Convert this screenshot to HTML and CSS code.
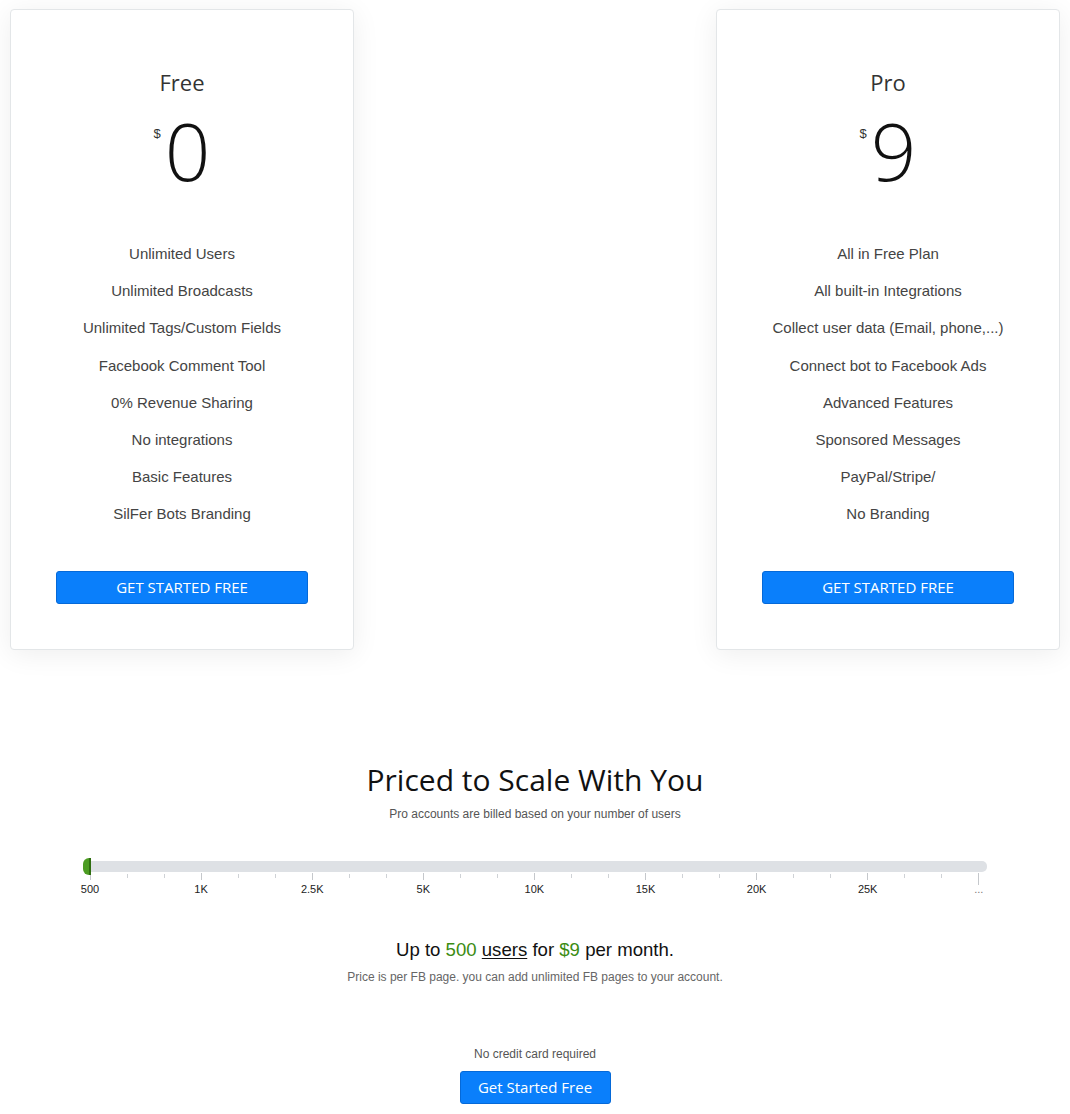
FILE: index.html
```html
<!DOCTYPE html>
<html lang="en">
  <head>
    <meta charset="UTF-8" />
    <meta name="viewport" content="width=device-width, initial-scale=1.0" />
    <title>Pricing</title>
    <link rel="stylesheet" href="styles.css">
  </head>
  <body>
    <!-- Plans -->
    <section class="plans">
      <div class="plan">
        <h2 class="plan-name">Free</h2>
        <div class="plan-price"><span class="currency">$</span><span class="amount">0</span></div>
        <ul class="plan-features">
          <li>Unlimited Users</li>
          <li>Unlimited Broadcasts</li>
          <li>Unlimited Tags/Custom Fields</li>
          <li>Facebook Comment Tool</li>
          <li>0% Revenue Sharing</li>
          <li>No integrations</li>
          <li>Basic Features</li>
          <li>SilFer Bots Branding</li>
        </ul>
        <a href="#" class="btn btn-block">GET STARTED FREE</a>
      </div>

      <div class="plan">
        <h2 class="plan-name">Pro</h2>
        <div class="plan-price"><span class="currency">$</span><span class="amount">9</span></div>
        <ul class="plan-features">
          <li>All in Free Plan</li>
          <li>All built-in Integrations</li>
          <li>Collect user data (Email, phone,...)</li>
          <li>Connect bot to Facebook Ads</li>
          <li>Advanced Features</li>
          <li>Sponsored Messages</li>
          <li>PayPal/Stripe/</li>
          <li>No Branding</li>
        </ul>
        <a href="#" class="btn btn-block">GET STARTED FREE</a>
      </div>
    </section>

    <!-- Scale -->
    <section class="scale">
      <h2 class="scale-title">Priced to Scale With You</h2>
      <p class="scale-sub">Pro accounts are billed based on your number of users</p>

      <div class="slider">
        <div class="slider-track">
          <span class="slider-handle"></span>
        </div>
        <div class="slider-ticks">
          <div class="tick major"><span>500</span></div>
          <div class="tick"></div><div class="tick"></div>
          <div class="tick major"><span>1K</span></div>
          <div class="tick"></div><div class="tick"></div>
          <div class="tick major"><span>2.5K</span></div>
          <div class="tick"></div><div class="tick"></div>
          <div class="tick major"><span>5K</span></div>
          <div class="tick"></div><div class="tick"></div>
          <div class="tick major"><span>10K</span></div>
          <div class="tick"></div><div class="tick"></div>
          <div class="tick major"><span>15K</span></div>
          <div class="tick"></div><div class="tick"></div>
          <div class="tick major"><span>20K</span></div>
          <div class="tick"></div><div class="tick"></div>
          <div class="tick major"><span>25K</span></div>
          <div class="tick"></div><div class="tick"></div>
          <div class="tick major last"><span>...</span></div>
        </div>
      </div>

      <p class="scale-result">Up to <span class="hl">500</span> <u>users</u> for <span class="hl">$9</span> per month.</p>
      <p class="scale-note">Price is per FB page. you can add unlimited FB pages to your account.</p>

      <p class="cta-note">No credit card required</p>
      <a href="#" class="btn btn-cta">Get Started Free</a>
    </section>
  </body>
</html>
```

FILE: styles.css
```css
/* ---------- Reset & Base ---------- */
*{box-sizing:border-box;margin:0;padding:0;}
body{font-family:"Liberation Sans",Arial,sans-serif;color:#333;background:#fff;}
a{text-decoration:none;}

/* ---------- Buttons ---------- */
.btn{display:inline-block;background:#0a7ffb;color:#fff;border:1px solid #0569d8;border-radius:3px;font-family:"Open Sans",sans-serif;font-size:15px;line-height:31px;text-align:center;}
.btn-block{display:block;margin:0 45px;}

/* ---------- Plans ---------- */
.plans{display:flex;justify-content:space-between;padding:9px 10px 0;}
.plan{width:344px;height:641px;background:#fff;border:1px solid #e3e6e8;border-radius:4px;box-shadow:0 4px 28px rgba(0,0,0,.07);text-align:center;padding-top:56px;}
.plan-name{font-family:"Open Sans",sans-serif;font-weight:400;font-size:22px;line-height:32px;color:#333;}
.plan-price{display:flex;justify-content:center;align-items:flex-start;margin-top:10px;height:84px;}
.currency{font-family:"Liberation Sans",Arial,sans-serif;font-size:13px;color:#333;margin:18px 4px 0 0;}
.amount{font-family:"Open Sans",sans-serif;font-weight:300;font-size:80px;line-height:84px;color:#111;}
.plan-features{list-style:none;margin-top:43px;font-size:15px;line-height:37.2px;color:#444;}
.plan-features + .btn{margin-top:38px;}

/* ---------- Scale ---------- */
.scale{text-align:center;padding-top:110px;}
.scale-title{font-family:"Open Sans",sans-serif;font-weight:400;font-size:30px;line-height:40px;color:#111;}
.scale-sub{font-size:12px;color:#555;margin-top:7px;}

.slider{width:897px;margin:40px 0 0 90px;}
.slider-track{position:relative;height:11px;background:#dee1e5;border-radius:0 5px 5px 0;}
.slider-handle{position:absolute;left:-7px;top:-3px;width:8px;height:17px;background:#4c9c22;border-radius:6px 0 0 6px;border-right:2px solid #2f6e10;}
.slider-ticks{display:flex;justify-content:space-between;width:889px;height:24px;}
.tick{width:0;display:flex;flex-direction:column;align-items:center;}
.tick::before{content:"";width:1px;height:4px;margin-top:2px;background:#cfd2d6;}
.tick.major::before{height:7px;margin-top:1px;background:#c5c8cc;}
.tick.last::before{height:12px;}
.tick span{font-size:11px;line-height:13px;color:#222;white-space:nowrap;margin-top:3px;}
.tick.last span{margin-top:-2px;color:#777;}

.scale-result{font-size:18.6px;color:#111;margin-top:43px;}
.scale-result .hl{color:#3b8c12;}
.scale-result u{text-underline-offset:2px;}
.scale-note{font-size:12px;color:#666;margin-top:9px;}

.cta-note{font-size:12px;color:#555;margin-top:63px;}
.btn-cta{width:151px;margin-top:10px;}
```
